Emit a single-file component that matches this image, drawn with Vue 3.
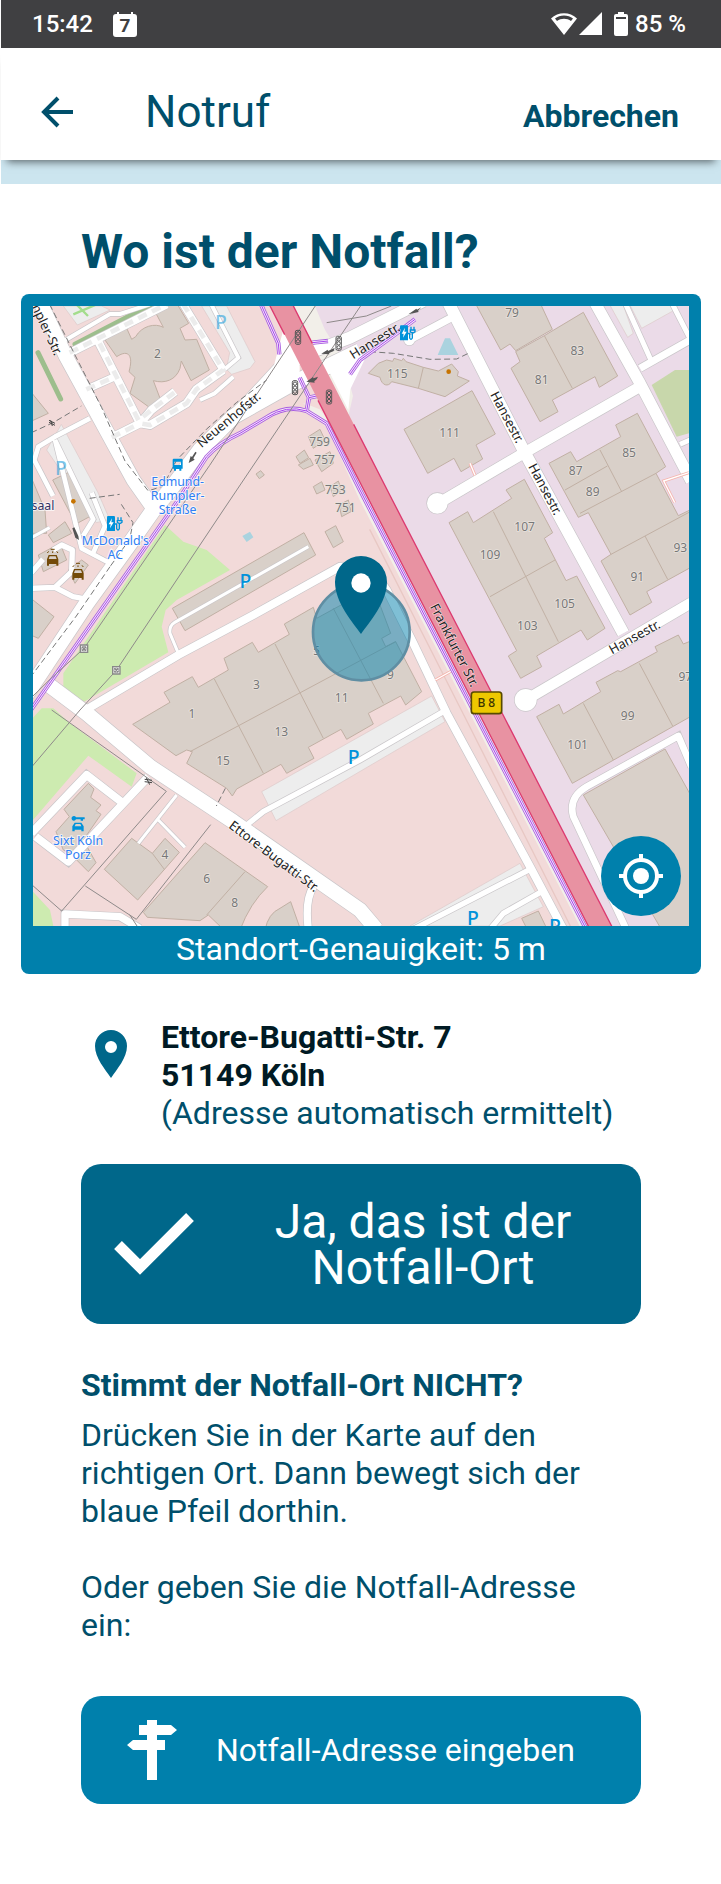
<script setup>
import { ref } from 'vue';

const accuracy = ref(5);

const address = ref({
  street: 'Ettore-Bugatti-Str. 7',
  city: '51149 Köln',
});

// Buildings, grouped by map section (x / y is the offset of the section)
const buildings = [
  { x: -39, y: -48, d: 'M255 150 318 110 335 148 347 140C365 108 405 98 430 112L400 55 470 40 506 100 480 115 495 150 530 148 568 240 513 272 484 213 480 235C468 270 435 282 400 272L422 330 388 352 330 310 345 262 327 245C340 200 328 175 290 200Z' },
  { x: -39, y: -48, d: 'M20 290 85 370 20 400ZM20 530 75 660 80 730 20 730ZM98 570 150 545 218 675 168 702ZM865 440 900 418 915 450 880 475ZM828 500 853 480 866 503 840 520ZM835 525 870 505 880 525 850 538ZM885 510 930 485 940 520 905 545ZM880 590 905 575 915 600 890 612ZM930 590 955 573 965 600 940 620ZM708 552 722 542 733 555 718 566Z' },
  { x: 951, y: -48, d: 'M375 38 570 38 607 118 497 182 480 162 452 180ZM497 185 583 137 700 67 803 258 748 292 735 260 607 330 624 365 570 395 483 235 510 215ZM583 137 667 295' },
  { x: 951, y: -48, d: 'M55 250 85 220 110 210 128 214 132 205 155 212 160 205 168 215 220 232 265 243 305 222 325 245 322 258 358 273 285 320 205 295 125 275C115 292 95 287 90 262ZM220 232 205 295M162 418 366 302 436 432 378 465 398 507 333 545 312 505 233 550Z' },
  { x: 951, y: -48, d: 'M597 520 662 485 680 515 812 440 797 405 862 370 947 530 918 550 985 677 1030 655 1030 828 890 905 905 937 840 975 753 813 783 793 715 668 685 682ZM750 480 815 605M645 600 772 528M918 550 690 670M783 793 1030 660M885 738 953 868' },
  { x: 951, y: 582, d: 'M297 68 353 35 370 68 485 -5 468 -30 523 -62 608 98 583 115 648 242 680 228 765 385 712 420 693 390 560 468 575 500 512 535 475 468 500 452ZM430 35 625 425M420 290 615 180' },
  { x: 951, y: 582, d: 'M560 650 627 613 640 642 752 575 738 547 803 512 812 515 922 455 915 440 985 405 1000 432 1030 420 1030 645 667 850ZM700 610 790 780M868 490 968 678' },
  { x: 951, y: 1212, d: 'M700 255 945 117 1030 270 1030 660 935 660ZM515 625 565 603 590 655 530 655Z' },
  { x: -39, y: 582, d: 'M457 325 852 98 887 165 495 392ZM915 95 947 77 970 125 940 143ZM957 15 985 0 993 35 965 50ZM85 105 135 65 155 100 100 128ZM55 165 120 130 140 180 70 215ZM145 210 185 180 205 195 165 250ZM20 285 102 350 55 415 20 400Z' },
  { x: -39, y: 582, d: 'M338 673 450 607 432 577 517 530 535 562 625 510 612 475 697 427 715 457 808 403 793 372 880 322 890 355 1060 262 1112 400 1085 415 1097 440 1127 425 1205 575 1157 615 1142 588 1045 640 1060 672 980 718 963 688 865 742 882 775 800 820 783 793 650 867 637 888 620 865 500 790 517 755 500 750 468 767ZM583 537 730 820M765 432 910 715M510 755 1127 425M940 325 1090 610' },
  { x: -39, y: 1212, d: 'M205 220 222 237 212 262 243 285 228 302 243 313 190 390 228 458 205 485 150 430 130 420 108 365 148 320 132 298ZM253 478 335 385 397 430 435 385 478 427 353 570ZM397 430 433 478M370 607 555 398 743 530Q690 580 660 660L612 660 565 615 540 632 382 622ZM675 485 560 615M735 660Q745 610 780 595L812 575 842 660Z' },
];

const roads = [
  { w: 42, d: 'M-25 -110 99 152 241 412 301 522 361 607' },
  { w: 46, d: 'M-20 1165 161 892 291 712 361 612 411 552 501 432 601 332 761 242 831 207 981 135' },
  { w: 36, d: 'M560 370 650 282 735 190 831 140 951 95 1171 -15' },
  { w: 44, d: 'M41 1132 161 1222 351 1382 601 1547 981 1812 1030 1870' },
  { w: 24, d: 'M141 1222 436 1047 661 927 921 782 1010 780 1061 852 1141 1012 1241 1222 1491 1682 1591 1870' },
  { w: 24, d: 'M101 145 401 -5M196 107 321 352 351 357 461 292 490 250 571 192M231 397 321 352 355 312 426 257' },
  { w: 22, d: 'M571 192 451 -5M156 252 241 214' },
  { w: 12, d: 'M81 112 231 24 261 24 350 -5M501 282 545 262 601 212M535 -5 616 155 575 190' },
  { w: 14, d: 'M171 337 66 392 16 422 4 462 60 570M66 402 181 640 150 690M66 402 146 727 241 777M176 560 216 660 181 740' },
  { w: 16, d: 'M-5 847 66 844 120 872 175 882M66 844 116 797 118 732 86 717 61 732M-5 800 30 760' },
  { w: 9, d: 'M436 1042 411 982Q408 960 424 950L826 722M-5 695 50 665' },
  { w: 24, d: 'M-5 1582 161 1407 271 1492M346 1412 106 1667 8 1592' },
  { w: 9, d: 'M431 1467 316 1612M376 1542 456 1624' },
  { w: 16, d: 'M641 1557 691 1517 981 1362 1231 1217' },
  { w: 22, d: 'M841 1742Q815 1782 826 1870M96 1870 96 1824 261 1832 320 1867' },
  { w: 16, d: 'M1141 1870 1491 1690M1371 1870 1411 1822 1526 1757' },
  { w: 20, d: 'M1975 1382 1936 1290 1661 1442Q1605 1475 1621 1532L1780 1870' },
  { w: 36, d: 'M1246 -10 1471 432 1771 982' },
  { w: 32, d: 'M1216 592 1471 442 1821 242' },
  { w: 34, d: 'M1686 -10 1821 232 1975 525' },
  { w: 22, d: 'M1821 187 1975 100M1129 102 1261 32' },
  { w: 15, d: 'M1776 -10 1856 167M1916 -10 1975 105M1941 415 1975 400' },
  { w: 32, d: 'M1478 1182 1975 890' },
];

// Round ends of the dead-end roads
const turningCircles = [
  { x: 1478, y: 1182, r: 33 },
  { x: 1213, y: 592, r: 31 },
  { x: 1129, y: 102, r: 16 },
];

const cyclePaths = [
  'M-5 1210 436 582 521 452Q560 410 621 382L700 335Q761 295 821 315L881 352 981 552 1336 1242 1660 1870',
  'M684 -5 736 112 739 145',
  'M951 205 981 162 1091 82 1146 40',
  'M821 315 828 275 800 215M828 275 860 268M838 110 885 105',
];

const footPaths = [
  'M50 -5 125 145 206 305 276 465 346 555 390 540 431 462 520 370 610 290 701 222',
  'M231 782 130 930 -5 1110',
  'M-5 380 60 350 145 300M170 577 260 565',
  'M1011 137 1081 142 1191 160 1271 159 1306 142',
  'M265 595 300 650 290 700 231 782',
  'M577 1447 550 1500',
];

const houseNumbers = [
  ['2', 373, 143], ['759', 860, 406], ['757', 875, 461], ['753', 907, 551], ['751', 937, 605],
  ['79', 1437, 20], ['83', 1633, 133], ['81', 1526, 220], ['115', 1093, 204], ['111', 1250, 379],
  ['85', 1788, 440], ['87', 1628, 495], ['89', 1679, 558], ['107', 1475, 663], ['109', 1371, 746],
  ['93', 1942, 726], ['91', 1813, 811], ['105', 1595, 892], ['103', 1483, 960], ['97', 1957, 1113],
  ['99', 1784, 1228], ['101', 1634, 1315], ['5', 850, 1034], ['3', 670, 1136], ['11', 926, 1175],
  ['9', 1072, 1105], ['1', 477, 1223], ['13', 745, 1278], ['15', 570, 1363], ['4', 396, 1645],
  ['6', 521, 1717], ['8', 605, 1791],
];

const streets = [
  { t: 'mpler-Str.', x: 38, y: 66, r: 65 },
  { t: 'Neuenhofstr.', x: 588, y: 342, r: -40 },
  { t: 'Hansestr.', x: 1026, y: 106, r: -32 },
  { t: 'Hansestr.', x: 1421, y: 334, r: 62 },
  { t: 'Hansestr.', x: 1535, y: 550, r: 62 },
  { t: 'Hansestr.', x: 1805, y: 994, r: -29 },
  { t: 'Frankfurter Str.', x: 1263, y: 1018, r: 63 },
  { t: 'Ettore-Bugatti-Str.', x: 722, y: 1652, r: 37 },
];

const parking = [
  { x: 564, y: 68, faded: true },
  { x: 84, y: 507, faded: true },
  { x: 637, y: 845 },
  { x: 962, y: 1375 },
  { x: 1320, y: 1857 },
  { x: 1566, y: 1881 },
];

const places = [
  { t: 'Edmund-', x: 434, y: 539 },
  { t: 'Rumpler-', x: 434, y: 581 },
  { t: 'Straße', x: 434, y: 623 },
  { t: "McDonald's", x: 247, y: 717 },
  { t: 'AC', x: 247, y: 760 },
  { t: 'Sixt Köln', x: 135, y: 1618 },
  { t: 'Porz', x: 135, y: 1660 },
];

const trafficLights = [[795, 94], [917, 112], [786, 245], [888, 273]];
const chargers = [[222, 630], [1101, 58]];
const carWashes = [[59, 732], [135, 774]];
const pylons = [[153, 1028], [250, 1093]];
</script>

<template>
  <div class="page">
    <div class="status-bar">
      <div class="status-group">
        <span>15:42</span>
        <svg class="calendar" width="24" height="25" viewBox="0 0 24 25">
          <path d="M3 2h1V0h2v2h12V0h2v2h1a3 3 0 0 1 3 3v17a3 3 0 0 1-3 3H3a3 3 0 0 1-3-3V5a3 3 0 0 1 3-3z" fill="#fff" />
          <text x="12" y="20" text-anchor="middle">7</text>
        </svg>
      </div>
      <div class="status-group right">
        <svg width="52" height="24" viewBox="0 0 52 24" fill="#fff">
          <path d="M13 23 0 6.500C7-.5 19-.5 26 6.500zM4 6.500l2 2.500c4-3 10-3 14 0l2-2.500c-5-4-13-4-18 0z" fill-rule="evenodd" />
          <path d="M28 23 51 0v23z" />
        </svg>
        <svg class="battery" width="14" height="24" viewBox="0 0 14 24">
          <path d="M4 0h6v2h2a2 2 0 0 1 2 2v18a2 2 0 0 1-2 2H2a2 2 0 0 1-2-2V4a2 2 0 0 1 2-2h2z" fill="#fff" />
          <path d="M2 5h10v2H2z" fill="#404042" />
        </svg>
        <span>85 %</span>
      </div>
    </div>

    <header class="app-bar">
      <button type="button" class="back" aria-label="Zurück">
        <svg width="32" height="32" viewBox="0 0 32 32" fill="none" stroke="#004f6b" stroke-width="4">
          <path d="M32 16H4M17 2 3 16l14 14" />
        </svg>
      </button>
      <span class="title">Notruf</span>
      <button type="button" class="cancel">Abbrechen</button>
    </header>
    <div class="strip"></div>

    <main>
      <h1>Wo ist der Notfall?</h1>

      <section class="map-card">
        <div class="map">
          <svg class="map-canvas" viewBox="0 0 1968 1860">
            <!-- land use -->
            <rect width="1968" height="1860" fill="#f2dad9" />
            <path d="M781 0H1968V1860H1736L1078 582 940 310Z" fill="#ebdbe8" />
            <path d="M781 0H846L875 70 930 160 960 270 946 330 900 250ZM810 290 860 310 900 360 1008 582 1348 1242 1666 1860H1640L980 582 885 370 840 320Z" fill="#f2efe9" />
            <path d="M1010 670 1300 1242 1612 1860" fill="none" stroke="#e8c8c4" stroke-width="4" />
            <g fill="#cdebb0">
              <path d="M396 657 451 707 521 732 591 792 431 882 398 912 386 962 406 1039 151 1189 91 1142V1102Z" />
              <path d="M0 1235 26 1207H61L111 1252 311 1402 296 1442 166 1349 0 1542ZM0 1757 51 1812 61 1860H0Z" />
            </g>
            <path d="M1856 237 1926 192H1968V382L1931 392Z" fill="#c8d7ab" />
            <g fill="#ededed" stroke="#ddc9c9" stroke-width="2">
              <path d="M91 0H206L231 12 133 57ZM506 0H581L666 167 651 187 596 205 580 190 590 140ZM41 432 85 355 195 560 230 640 190 650Z" />
              <path d="M1731 -2H1771L1801 82 1784 94ZM1791 -2H1936L1916 17 1826 67Z" />
              <path d="M686 1457 1196 1170 1236 1247 729 1544ZM1131 1860 1461 1672 1501 1747 1531 1802 1401 1860Z" />
            </g>
            <path d="M1214 147 1236 97H1251L1276 147ZM628 690 651 677 661 694 641 708Z" fill="#aad3df" />
            <path d="M126 115 351 -2M15 140 83 279" fill="none" stroke="#9dbe8d" stroke-width="15" stroke-linecap="round" />
            <path d="M121 25 191 -5M130 -5 165 30" fill="none" stroke="#a3dd8c" stroke-width="7" />

            <!-- buildings -->
            <path
              v-for="(b, i) in buildings"
              :key="'b' + i"
              class="building"
              :d="b.d"
              :transform="`translate(${b.x} ${b.y})`"
            />

            <!-- roads -->
            <path v-for="(r, i) in roads" :key="'c' + i" class="road-casing" :d="r.d" :stroke-width="r.w + 4" />
            <circle v-for="c in turningCircles" :key="'o' + c.x" :cx="c.x" :cy="c.y" :r="c.r + 2" fill="#c9c6c9" />
            <path v-for="(r, i) in roads" :key="'r' + i" class="road" :d="r.d" :stroke-width="r.w" />
            <circle v-for="c in turningCircles" :key="'i' + c.x" :cx="c.x" :cy="c.y" :r="c.r" fill="#fff" />
            <path d="M661 275 720 190 750 75 800 150 800 200ZM885 190 946 312 952 250 1000 150Z" fill="#fff" />
            <path class="private-road" d="M110 140 400 -5M200 112 321 352 351 357 461 292 490 250 571 192 451 -5M160 250 236 216M236 394 315 355M330 332 355 312 424 260" />
            <path v-for="(p, i) in footPaths" :key="'f' + i" class="foot-path" :d="p" />
            <path d="M1311 472 1326 508M1968 500 1892 525 1925 590M1207 1122 1261 1092" fill="none" stroke="#f5b5ae" stroke-width="9" />
            <path d="M1311 472 1326 508M1968 500 1892 525 1925 590M1207 1122 1261 1092" fill="none" stroke="#fff" stroke-width="4" />

            <g fill="none">
              <path v-for="(p, i) in cyclePaths" :key="'p' + i" :d="p" stroke="#a95fe0" stroke-width="13" />
              <path v-for="(p, i) in cyclePaths" :key="'q' + i" :d="p" stroke="#f6ecf8" stroke-width="8" />
              <path v-for="(p, i) in cyclePaths" :key="'s' + i" :d="p" stroke="#a843f0" stroke-width="3" />
            </g>

            <path d="M706 -10H776L1078 582 1418 1242 1741 1870H1671L1348 1242 1008 582Z" fill="#e892a2" />
            <path d="M706 -10 755 86M855 283 1008 582 1348 1242 1671 1870M776 -10 838 112M962 355 1078 582 1418 1242 1741 1870" fill="none" stroke="#dc3a70" stroke-width="4" />

            <!-- power lines and fences -->
            <g fill="none" stroke="#8f8a8a" stroke-width="3">
              <path d="M850 -5 530 478 153 1027 51 1120 -5 1175M986 -5 571 612 250 1093 141 1212 -5 1384M881 50 1000 30 1075 0" />
              <path d="M56 1212 400 1456 86 1815 -5 1735M157 1740 310 1840 533 1556M290 1826 312 1860" />
            </g>
            <g v-for="p in pylons" :key="'py' + p[0]" :transform="`translate(${p[0]} ${p[1]})`" fill="none" stroke="#888" stroke-width="4">
              <path d="M-11-11H11V11H-11ZM-6-6 6 6M6-6-6 6" fill="#eee" />
              <circle r="7" stroke-width="2" />
            </g>

            <!-- one-way arrows -->
            <g fill="#555">
              <path d="M467 471 473 450 477 453 487 437 491 440 481 457 485 461ZM865 143 884 131 885 135 905 126 902 135 888 141 889 145ZM820 227 840 213 842 217 855 212 851 220 844 226 845 230ZM1126 25 1150 8 1152 11 1165 4 1155 14 1157 18ZM118 667 124 664 136 690 138 702 127 695Z" />
              <path d="M48 343 66 352M48 349 66 358M53 343 58 360M335 1420 357 1423M335 1427 357 1430M340 1415 350 1436" stroke="#444" stroke-width="3" />
            </g>

            <!-- symbols -->
            <g v-for="t in trafficLights" :key="'t' + t[0]" :transform="`translate(${t[0]} ${t[1]})`" fill="none" stroke="#555" stroke-width="3">
              <rect x="-8" y="-21" width="16" height="42" rx="5" />
              <circle cy="-12" r="5" /><circle r="5" /><circle cy="12" r="5" />
            </g>
            <g v-for="c in chargers" :key="'ch' + c[0]" :transform="`translate(${c[0]} ${c[1]})`">
              <path d="M3 0H21Q24 0 24 4V45H0V4Q0 0 3 0Z" fill="#0092da" />
              <path d="M15 7 5 25H11L9 37 20 19H13Z" fill="#fff" />
              <path d="M24 24H29V38Q33 46 37 38V20M33 4V14M42 4V14M31 14H45V19Q38 26 31 19Z" fill="none" stroke="#0092da" stroke-width="4" />
            </g>
            <g v-for="w in carWashes" :key="'w' + w[0]" :transform="`translate(${w[0]} ${w[1]})`" fill="#734a08">
              <path d="M-12 15H12L17 28V47H11V42H-11V47H-17V28ZM-9 19-12 27H12L9 19Z" fill-rule="evenodd" />
              <path d="M-6-2H6M-12 4-16 9M0 4V9M12 4 16 9" stroke="#734a08" stroke-width="3" />
            </g>
            <g transform="translate(434 476)" fill="#0092da">
              <path d="M-12-18H12Q15-18 15-14V12H11V18H5V13H-5V18H-11V12H-15V-14Q-15-18-12-18ZM-10-9V1H10V-9Z" fill-rule="evenodd" />
            </g>
            <g transform="translate(135 1550)" fill="#0092da">
              <path d="M-13-20A7 7 0 0 1-6-16H20V-10H15V-6H8V-10H-6A7 7 0 1 1-13-20ZM-10 0H10L17 11V26H10V21H-10V26H-17V11ZM-7 4-10 11H10L7 4Z" fill-rule="evenodd" />
            </g>
            <circle cx="121" cy="586" r="7" fill="#c77400" />
            <circle cx="1247" cy="197" r="7" fill="#c77400" />

            <!-- labels -->
            <text v-for="n in houseNumbers" :key="'n' + n[0]" class="number" :x="n[1]" :y="n[2] + 13">{{ n[0] }}</text>
            <text
              v-for="(s, i) in streets"
              :key="'st' + i"
              class="street"
              :transform="`translate(${s.x} ${s.y}) rotate(${s.r})`"
              y="12"
            >{{ s.t }}</text>
            <text v-for="p in places" :key="p.t" class="place" :x="p.x" :y="p.y">{{ p.t }}</text>
            <text class="place dark" x="30" y="611">saal</text>
            <text v-for="p in parking" :key="'pk' + p.x" class="parking" :class="{ faded: p.faded }" :x="p.x" :y="p.y">P</text>

            <rect x="1315" y="1158" width="91" height="65" rx="8" fill="#edc800" stroke="#574b00" stroke-width="5" />
            <text class="badge" x="1360" y="1204">B 8</text>

            <!-- current position -->
            <circle cx="985" cy="978" r="145" fill="#0080ac" fill-opacity="0.5" stroke="#5f8ea3" stroke-width="8" />
            <path d="M984 984C960 950 906 890 906 828A78 78 0 0 1 1062 828C1062 890 1008 950 984 984Z" fill="#00678a" />
            <circle cx="984" cy="831" r="29" fill="#fff" />
          </svg>

          <button type="button" class="locate" aria-label="Standort bestimmen">
            <svg width="44" height="44" viewBox="0 0 44 44" fill="none" stroke="#fff" stroke-width="4">
              <circle cx="22" cy="22" r="16" />
              <path d="M22 0v6M22 38v6M0 22h6M38 22h6" />
              <circle cx="22" cy="22" r="8" fill="#fff" stroke="none" />
            </svg>
          </button>
        </div>
        <p class="accuracy">Standort-Genauigkeit: {{ accuracy }} m</p>
      </section>

      <div class="content">
        <div class="address">
          <svg width="32" height="48" viewBox="0 0 32 48">
            <path d="M16 48C10 39 0 28 0 16a16 16 0 0 1 32 0c0 12-10 23-16 32zM16 11a6 6 0 1 0 0 12 6 6 0 0 0 0-12z" fill="#00678a" fill-rule="evenodd" />
          </svg>
          <div>
            <strong>{{ address.street }}</strong>
            <strong>{{ address.city }}</strong>
            <span>(Adresse automatisch ermittelt)</span>
          </div>
        </div>

        <button type="button" class="confirm">
          <svg width="80" height="62" viewBox="0 0 80 62" fill="none" stroke="#fff" stroke-width="11">
            <path d="M4 32 26 54 76 4" />
          </svg>
          <span>Ja, das ist der Notfall-Ort</span>
        </button>

        <div class="hint">
          <h2>Stimmt der Notfall-Ort NICHT?</h2>
          <p>Drücken Sie in der Karte auf den richtigen Ort. Dann bewegt sich der blaue Pfeil dorthin.</p>
          <p>Oder geben Sie die Notfall-Adresse ein:</p>
        </div>

        <button type="button" class="enter-address">
          <svg width="50" height="60" viewBox="0 0 50 60" fill="#fff">
            <path d="M20 0h10v5h14l6 5-6 5H30v5h8v10h-8v30H20V30H6l-6-5 6-5h14v-5h-8V5h8z" />
          </svg>
          <span>Notfall-Adresse eingeben</span>
        </button>
      </div>
    </main>
  </div>
</template>

<style>
body {
  background: #fff;
}
</style>

<style scoped>
.page {
  margin-left: 1px;
  font-family: Roboto, sans-serif;
  font-size: 32px;
  line-height: 38px;
  color: #004f6b;
}
button {
  border: none;
  padding: 0;
  font: inherit;
  color: inherit;
  background: none;
  cursor: pointer;
}
svg {
  display: block;
  flex-shrink: 0;
}
.status-bar {
  display: flex;
  justify-content: space-between;
  align-items: center;
  height: 48px;
  padding: 0 35px 0 31px;
  background: #404042;
  color: #fff;
  font-size: 24px;
  font-weight: 500;
}
.status-group {
  display: flex;
  align-items: center;
  gap: 20px;
}
.status-group.right {
  gap: 7px;
}
.battery {
  margin-left: 4px;
}
.calendar text {
  font-size: 19px;
  font-weight: 700;
  fill: #404042;
}
.app-bar {
  position: relative;
  display: flex;
  align-items: center;
  box-sizing: border-box;
  height: 112px;
  padding: 16px 42px 0 40px;
  background: #fff;
  box-shadow: 0 8px 8px -6px rgba(0, 0, 0, 0.55);
}
.title {
  flex: 1;
  margin-left: 72px;
  font-size: 44px;
}
.cancel {
  padding-top: 8px;
  font-weight: 700;
}
.strip {
  height: 24px;
  background: #cce5ef;
}
main {
  background: #fff;
}
h1 {
  margin: 0;
  padding: 40px 80px 14px;
  font-size: 48px;
  line-height: 56px;
}
.map-card {
  margin: 0 20px;
  padding: 12px 12px 0;
  border-radius: 8px;
  background: #0080ac;
}
.map {
  position: relative;
}
.map-canvas {
  width: 100%;
  height: auto;
  font-family: "Noto Sans", sans-serif;
}
.accuracy {
  margin: 0;
  padding: 4px 0 6px;
  color: #fff;
  text-align: center;
}
.locate {
  position: absolute;
  right: 8px;
  bottom: 10px;
  display: flex;
  align-items: center;
  justify-content: center;
  width: 80px;
  height: 80px;
  border-radius: 50%;
  background: #0080ac;
}
.building {
  fill: #d9d0c9;
  stroke: #c1b0a4;
  stroke-width: 3;
}
.road-casing {
  fill: none;
  stroke: #c9c6c9;
}
.road {
  fill: none;
  stroke: #fff;
  stroke-linejoin: round;
}
.private-road {
  fill: none;
  stroke: #ececec;
  stroke-width: 14;
  stroke-dasharray: 28 18;
}
.foot-path {
  fill: none;
  stroke: #777;
  stroke-width: 3;
  stroke-dasharray: 18 10;
}
.number {
  font-size: 36px;
  text-anchor: middle;
  fill: #777;
  stroke: #e8e2dd;
  stroke-width: 5;
  paint-order: stroke;
}
.street {
  font-size: 39px;
  text-anchor: middle;
  fill: #222;
  stroke: #fff;
  stroke-width: 4;
  stroke-opacity: 0.6;
  paint-order: stroke;
}
.place {
  font-size: 37px;
  text-anchor: middle;
  fill: #2f7ff5;
  stroke: #fff;
  stroke-width: 6;
  stroke-opacity: 0.7;
  paint-order: stroke;
}
.place.dark {
  fill: #333366;
}
.parking {
  font-size: 58px;
  font-weight: 500;
  text-anchor: middle;
  fill: #0092da;
}
.parking.faded {
  opacity: 0.5;
}
.badge {
  font-size: 36px;
  font-weight: 500;
  text-anchor: middle;
  fill: #3b3300;
}
.content {
  padding: 44px 80px 80px;
}
.address {
  display: flex;
  gap: 34px;
  padding-left: 14px;
}
.address svg {
  margin-top: 12px;
}
.address strong,
.address span {
  display: block;
}
.address strong {
  color: #001a24;
}
.confirm,
.enter-address {
  display: flex;
  align-items: center;
  width: 100%;
  border-radius: 20px;
  color: #fff;
}
.confirm {
  height: 160px;
  margin: 32px 0 42px;
  padding: 0 33px;
  background: #00678a;
  font-size: 48px;
  line-height: 46px;
}
.confirm span {
  flex: 1;
  padding: 2px 10px 0 54px;
}
.hint {
  padding-right: 20px;
}
h2 {
  margin: 0 0 12px;
  font-size: 32px;
  line-height: 38px;
}
p {
  margin: 0 0 38px;
}
.enter-address {
  gap: 39px;
  height: 108px;
  margin-top: 52px;
  padding: 0 46px;
  background: #0080ac;
}
</style>
